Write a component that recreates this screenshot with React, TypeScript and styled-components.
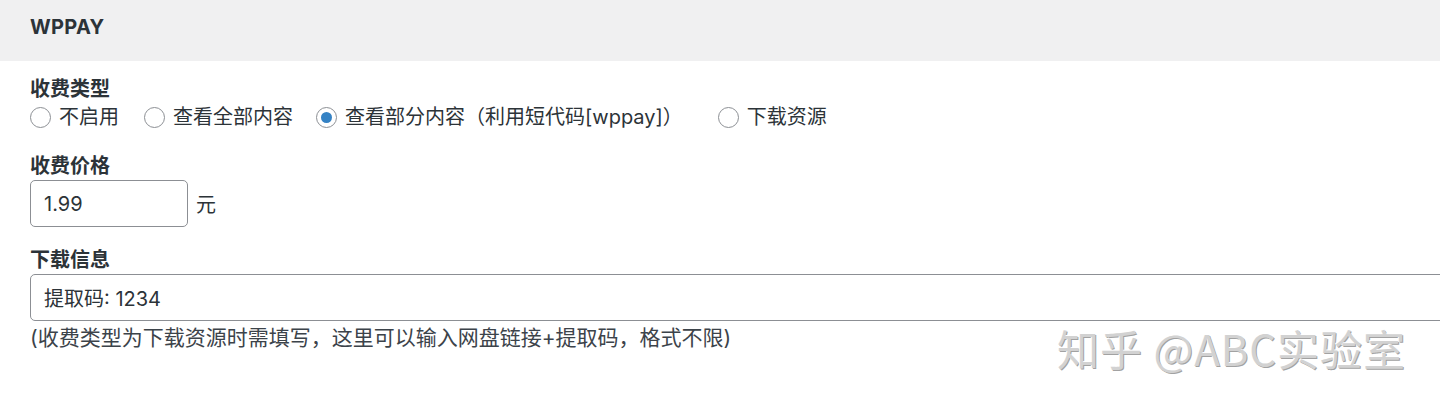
import React from "react";
import styled, { createGlobalStyle } from "styled-components";

const Global = createGlobalStyle`
  html, body { margin: 0; padding: 0; background: #fff; }
  body {
    font-family: "Inter", "Noto Sans CJK SC", sans-serif;
    color: #1d2327;
    overflow: hidden;
  }
`;

const Page = styled.div`
  position: relative;
  width: 1440px;
  height: 406px;
  overflow: hidden;
  background: #fff;
`;

const Header = styled.div`
  height: 61px;
  box-sizing: border-box;
  background: #f0f0f1;
  padding: 14px 0 0 30px;
  font-size: 20px;
  font-weight: 700;
  line-height: 26px;
  color: #2c3338;
  letter-spacing: 0.3px;
`;

const Body = styled.div`
  padding: 14px 0 0 30px;
  display: flex;
  flex-direction: column;
`;

const Label = styled.div<{ $gap?: number }>`
  font-size: 20px;
  font-weight: 700;
  line-height: 28px;
  color: #2c3338;
  margin-top: ${(p) => p.$gap ?? 0}px;
`;

const RadioRow = styled.div`
  display: flex;
  align-items: center;
  height: 28px;
`;

const RadioItem = styled.label<{ $space: number }>`
  display: flex;
  align-items: center;
  gap: 8px;
  font-size: 20px;
  line-height: 28px;
  color: #2c3338;
  margin-right: ${(p) => p.$space}px;
`;

const RadioCircle = styled.span<{ $checked?: boolean }>`
  width: 21px;
  height: 21px;
  box-sizing: border-box;
  border: 1px solid #8c8f94;
  border-radius: 50%;
  display: flex;
  align-items: center;
  justify-content: center;
  background: #fff;
  flex-shrink: 0;
  &::after {
    content: "";
    display: ${(p) => (p.$checked ? "block" : "none")};
    width: 11px;
    height: 11px;
    border-radius: 50%;
    background: #3582c4;
  }
`;

const InputRow = styled.div`
  display: flex;
  align-items: center;
  gap: 8px;
`;

const TextBox = styled.div<{ $width: string }>`
  width: ${(p) => p.$width};
  height: 47px;
  box-sizing: border-box;
  border: 1px solid #8c8f94;
  border-radius: 5px;
  padding: 0 13px;
  display: flex;
  align-items: center;
  font-size: 20px;
  color: #2c3338;
  background: #fff;
`;

const Unit = styled.span`
  font-size: 20px;
  color: #2c3338;
`;

const Description = styled.div`
  margin-top: 3px;
  font-size: 21px;
  line-height: 28px;
  color: #3c434a;
`;

const Watermark = styled.div`
  position: absolute;
  left: 1057px;
  top: 322px;
  font-family: "Noto Sans CJK SC", sans-serif;
  font-size: 42px;
  font-weight: 400;
  line-height: 52px;
  color: #d2d2d2;
  text-shadow: -1px -1px 0 #ffffff, 1px 1px 0 #a2a2a2;
  white-space: nowrap;
  letter-spacing: 1px;
`;

const options = [
  { label: "不启用", space: 25 },
  { label: "查看全部内容", space: 23 },
  { label: "查看部分内容（利用短代码[wppay]）", space: 35, checked: true },
  { label: "下载资源", space: 0 },
];

export default function App() {
  return (
    <Page>
      <Global />
      <Header>WPPAY</Header>
      <Body>
        <Label>收费类型</Label>
        <RadioRow>
          {options.map((o) => (
            <RadioItem key={o.label} $space={o.space}>
              <RadioCircle $checked={o.checked} />
              {o.label}
            </RadioItem>
          ))}
        </RadioRow>
        <Label $gap={21}>收费价格</Label>
        <InputRow>
          <TextBox $width="158px">1.99</TextBox>
          <Unit>元</Unit>
        </InputRow>
        <Label $gap={19}>下载信息</Label>
        <TextBox $width="1440px">提取码: 1234</TextBox>
        <Description>
          (收费类型为下载资源时需填写，这里可以输入网盘链接+提取码，格式不限)
        </Description>
      </Body>
      <Watermark>知乎 @ABC实验室</Watermark>
    </Page>
  );
}
